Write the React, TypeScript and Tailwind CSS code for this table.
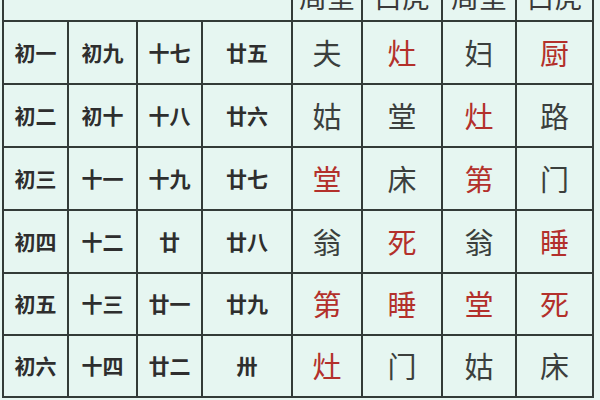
import React from "react";

type Cell = { t: string; red?: boolean };

const rows: { days: string[]; marks: Cell[] }[] = [
  { days: ["初一", "初九", "十七", "廿五"], marks: [{ t: "夫" }, { t: "灶", red: true }, { t: "妇" }, { t: "厨", red: true }] },
  { days: ["初二", "初十", "十八", "廿六"], marks: [{ t: "姑" }, { t: "堂" }, { t: "灶", red: true }, { t: "路" }] },
  { days: ["初三", "十一", "十九", "廿七"], marks: [{ t: "堂", red: true }, { t: "床" }, { t: "第", red: true }, { t: "门" }] },
  { days: ["初四", "十二", "廿", "廿八"], marks: [{ t: "翁" }, { t: "死", red: true }, { t: "翁" }, { t: "睡", red: true }] },
  { days: ["初五", "十三", "廿一", "廿九"], marks: [{ t: "第", red: true }, { t: "睡", red: true }, { t: "堂", red: true }, { t: "死", red: true }] },
  { days: ["初六", "十四", "廿二", "卅"], marks: [{ t: "灶", red: true }, { t: "门" }, { t: "姑" }, { t: "床" }] },
];

const heads = ["周堂", "白虎", "周堂", "白虎"];

export default function App() {
  return (
    <div
      className="w-[600px] h-[400px] overflow-hidden bg-[#e6f6f1]"
      style={{ fontFamily: '"Noto Sans CJK SC", "Noto Sans", sans-serif' }}
    >
      <div className="mt-[-43px] ml-[2px] inline-grid grid-cols-[63px_67px_63px_88px_68px_78px_72px_75px] grid-rows-[61px_61px_61px_61px_61px_60px_60px] gap-[2px] p-[2px] bg-[#333b38]">
        {/* header row */}
        <div className="col-span-4 bg-[#e6f6f1]" />
        {heads.map((h, i) => (
          <div key={i} className="bg-[#e6f6f1] flex items-end justify-center pb-[10px] text-[28px] leading-none text-[#3a3a3a]">
            {h}
          </div>
        ))}

        {rows.map((r, ri) => (
          <React.Fragment key={ri}>
            {r.days.map((d, di) => (
              <div key={"d" + di} className="bg-[#e6f6f1] flex items-center justify-center text-[21px] font-bold text-[#2e2e2e]">
                {d}
              </div>
            ))}
            {r.marks.map((m, mi) => (
              <div
                key={"m" + mi}
                className={`bg-[#e6f6f1] flex items-center justify-center text-[29px] ${m.red ? "text-[#b3302b]" : "text-[#3b3f3d]"}`}
              >
                {m.t}
              </div>
            ))}
          </React.Fragment>
        ))}
      </div>
    </div>
  );
}
